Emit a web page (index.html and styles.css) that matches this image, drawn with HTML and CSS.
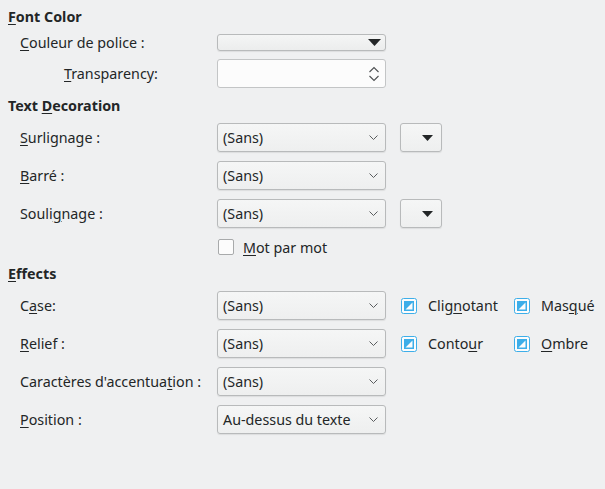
FILE: index.html
```html
<!DOCTYPE html>
<html lang="fr">
<head>
<meta charset="utf-8">
<title>Font Effects</title>
<link rel="stylesheet" href="styles.css">
</head>
<body>
<div class="page">
  <div class="heading h-first"><u>F</u>ont Color</div>
  <div class="row row-color">
    <div class="label"><u>C</u>ouleur de police :</div>
    <div class="colorbox"><svg class="tri" width="13" height="7" viewBox="0 0 13 7"><path d="M0 0H13L6.5 7Z" fill="#232627"/></svg></div>
  </div>
  <div class="row row-spin">
    <div class="label label-deep"><u>T</u>ransparency:</div>
    <div class="spin">
      <svg class="spin-arrows" width="12" height="16" viewBox="0 0 12 16"><path d="M1.5 6L6 1.5L10.5 6M1.5 10L6 14.5L10.5 10" fill="none" stroke="#4d5052" stroke-width="1.1"/></svg>
    </div>
  </div>

  <div class="heading h-deco">Text <u>D</u>ecoration</div>
  <div class="row row-first">
    <div class="label"><u>S</u>urlignage :</div>
    <div class="combo"><span>(Sans)</span><svg class="chev" width="9" height="5" viewBox="0 0 9 5"><path d="M0.5 0.5L4.5 4.5L8.5 0.5" fill="none" stroke="#5a5d5f" stroke-width="1"/></svg></div>
    <div class="menubtn"><svg width="11" height="6" viewBox="0 0 11 6"><path d="M0 0H11L5.5 6Z" fill="#232627"/></svg></div>
  </div>
  <div class="row">
    <div class="label"><u>B</u>arré :</div>
    <div class="combo"><span>(Sans)</span><svg class="chev" width="9" height="5" viewBox="0 0 9 5"><path d="M0.5 0.5L4.5 4.5L8.5 0.5" fill="none" stroke="#5a5d5f" stroke-width="1"/></svg></div>
  </div>
  <div class="row">
    <div class="label">Souli<u>g</u>nage :</div>
    <div class="combo"><span>(Sans)</span><svg class="chev" width="9" height="5" viewBox="0 0 9 5"><path d="M0.5 0.5L4.5 4.5L8.5 0.5" fill="none" stroke="#5a5d5f" stroke-width="1"/></svg></div>
    <div class="menubtn"><svg width="11" height="6" viewBox="0 0 11 6"><path d="M0 0H11L5.5 6Z" fill="#232627"/></svg></div>
  </div>
  <div class="row row-check">
    <div class="label"></div>
    <div class="check"><span class="box"></span><span class="check-text"><u>M</u>ot par mot</span></div>
  </div>

  <div class="heading h-effects"><u>E</u>ffects</div>
  <div class="row row-first">
    <div class="label">C<u>a</u>se:</div>
    <div class="combo"><span>(Sans)</span><svg class="chev" width="9" height="5" viewBox="0 0 9 5"><path d="M0.5 0.5L4.5 4.5L8.5 0.5" fill="none" stroke="#5a5d5f" stroke-width="1"/></svg></div>
    <div class="checks">
      <div class="check"><svg class="cbox" width="16" height="16" viewBox="0 0 16 16"><rect x="0.5" y="0.5" width="15" height="15" rx="2" fill="#fcfcfc" stroke="#3daee9"/><rect x="3" y="3" width="10" height="10" fill="#3daee9"/><path d="M11.5 4.5V11.5H4.5Z" fill="#fcfcfc"/></svg><span class="check-text">Clig<u>n</u>otant</span></div>
      <div class="check"><svg class="cbox" width="16" height="16" viewBox="0 0 16 16"><rect x="0.5" y="0.5" width="15" height="15" rx="2" fill="#fcfcfc" stroke="#3daee9"/><rect x="3" y="3" width="10" height="10" fill="#3daee9"/><path d="M11.5 4.5V11.5H4.5Z" fill="#fcfcfc"/></svg><span class="check-text">Mas<u>q</u>ué</span></div>
    </div>
  </div>
  <div class="row">
    <div class="label"><u>R</u>elief :</div>
    <div class="combo"><span>(Sans)</span><svg class="chev" width="9" height="5" viewBox="0 0 9 5"><path d="M0.5 0.5L4.5 4.5L8.5 0.5" fill="none" stroke="#5a5d5f" stroke-width="1"/></svg></div>
    <div class="checks">
      <div class="check"><svg class="cbox" width="16" height="16" viewBox="0 0 16 16"><rect x="0.5" y="0.5" width="15" height="15" rx="2" fill="#fcfcfc" stroke="#3daee9"/><rect x="3" y="3" width="10" height="10" fill="#3daee9"/><path d="M11.5 4.5V11.5H4.5Z" fill="#fcfcfc"/></svg><span class="check-text">Conto<u>u</u>r</span></div>
      <div class="check"><svg class="cbox" width="16" height="16" viewBox="0 0 16 16"><rect x="0.5" y="0.5" width="15" height="15" rx="2" fill="#fcfcfc" stroke="#3daee9"/><rect x="3" y="3" width="10" height="10" fill="#3daee9"/><path d="M11.5 4.5V11.5H4.5Z" fill="#fcfcfc"/></svg><span class="check-text"><u>O</u>mbre</span></div>
    </div>
  </div>
  <div class="row">
    <div class="label">Caractères d'accentua<u>t</u>ion :</div>
    <div class="combo"><span>(Sans)</span><svg class="chev" width="9" height="5" viewBox="0 0 9 5"><path d="M0.5 0.5L4.5 4.5L8.5 0.5" fill="none" stroke="#5a5d5f" stroke-width="1"/></svg></div>
  </div>
  <div class="row">
    <div class="label"><u>P</u>osition :</div>
    <div class="combo"><span>Au-dessus du texte</span><svg class="chev" width="9" height="5" viewBox="0 0 9 5"><path d="M0.5 0.5L4.5 4.5L8.5 0.5" fill="none" stroke="#5a5d5f" stroke-width="1"/></svg></div>
  </div>
</div>
</body>
</html>
```
FILE: styles.css
```css
html, body {
  margin: 0;
  padding: 0;
  background: #eff0f1;
}
body {
  font-family: "Noto Sans", "DejaVu Sans", sans-serif;
  font-size: 14.3px;
  color: #232627;
  width: 605px;
  height: 489px;
  overflow: hidden;
}
u {
  text-decoration: underline;
  text-decoration-thickness: 1px;
  text-underline-offset: 2px;
}
.page {
  padding: 7px 8px 0 8px;
  display: flex;
  flex-direction: column;
}
.heading {
  font-weight: bold;
  line-height: 20px;
  height: 20px;
}
.h-deco {
  margin-top: 8px;
}
.h-effects {
  margin-top: 7px;
}
.row {
  display: flex;
  align-items: center;
  height: 29px;
  margin-top: 9px;
}
.row-first {
  margin-top: 7px;
}
.row-color {
  height: 17px;
  margin-top: 7px;
}
.row-spin {
  margin-top: 8px;
}
.row-check {
  height: 20px;
  margin-top: 9px;
}
.label {
  width: 197px;
  padding-left: 12px;
  flex: none;
  white-space: nowrap;
}
.label-deep {
  width: 153px;
  padding-left: 56px;
}
.colorbox {
  box-sizing: border-box;
  width: 169px;
  height: 17px;
  border: 1px solid #b8babb;
  border-radius: 3px;
  background: linear-gradient(#f4f5f5, #eceded);
  box-shadow: 0 1px 1px rgba(0,0,0,0.08);
  display: flex;
  align-items: center;
  justify-content: flex-end;
  padding-right: 4px;
}
.spin {
  box-sizing: border-box;
  width: 169px;
  height: 29px;
  border: 1px solid #c3c5c6;
  border-radius: 3px;
  background: #fcfcfc;
  display: flex;
  align-items: center;
  justify-content: flex-end;
  padding-right: 5px;
}
.combo {
  box-sizing: border-box;
  width: 169px;
  height: 29px;
  border: 1px solid #b8babb;
  border-radius: 3px;
  background: linear-gradient(#f5f6f6, #eeefef);
  box-shadow: 0 1px 1px rgba(0,0,0,0.08);
  display: flex;
  align-items: center;
  justify-content: space-between;
  padding: 0 7px 0 5px;
  flex: none;
}
.combo span {
  white-space: nowrap;
}
.menubtn {
  box-sizing: border-box;
  width: 42px;
  height: 29px;
  margin-left: 14px;
  border: 1px solid #b8babb;
  border-radius: 3px;
  background: linear-gradient(#f5f6f6, #eeefef);
  box-shadow: 0 1px 1px rgba(0,0,0,0.08);
  display: flex;
  align-items: center;
  justify-content: flex-end;
  padding-right: 8px;
}
.checks {
  display: grid;
  grid-template-columns: 113px auto;
  margin-left: 15px;
}
.check {
  display: flex;
  align-items: center;
  height: 20px;
}
.box {
  box-sizing: border-box;
  width: 16px;
  height: 16px;
  border: 1px solid #a8aaab;
  border-radius: 2px;
  background: #fcfcfc;
  margin-left: 1px;
  flex: none;
}
.cbox {
  flex: none;
  display: block;
}
.check-text {
  margin-left: 11px;
  white-space: nowrap;
}
.row-check .check-text {
  margin-left: 9px;
}
```
